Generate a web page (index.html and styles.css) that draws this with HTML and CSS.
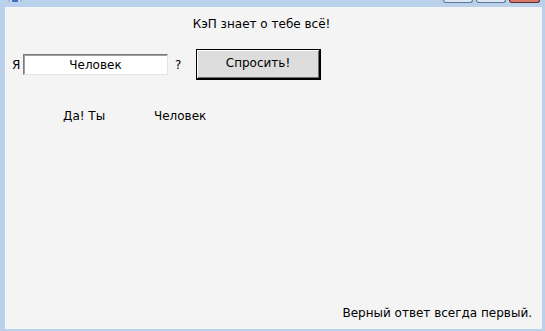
FILE: index.html
```html
<!DOCTYPE html>
<html lang="ru">
<head>
  <meta charset="utf-8">
  <title>КэП</title>
  <link rel="stylesheet" href="styles.css">
</head>
<body>
<div class="window">
  <!-- полоска заголовка окна -->
  <div class="titlebar">
    <span class="app-icon"></span>
    <div class="caption-buttons">
      <span class="cap-btn"></span>
      <span class="cap-btn"></span>
      <span class="cap-btn close"></span>
    </div>
  </div>

  <div class="client">
    <div class="headline">КэП знает о тебе всё!</div>

    <div class="ask-row">
      <label for="who">Я</label>
      <input type="text" id="who" value="Человек">
      <span class="qmark">?</span>
      <button class="ask-btn">Спросить!</button>
    </div>

    <div class="answer-row">
      <span class="answer-yes">Да! Ты</span>
      <span class="answer-who">Человек</span>
    </div>

    <div class="footer">Верный ответ всегда первый.</div>
  </div>
</div>
</body>
</html>
```

FILE: styles.css
```css
/* базовые стили */
html, body {
  margin: 0;
  padding: 0;
}

body {
  width: 545px;
  height: 331px;
  overflow: hidden;
  background-color: #b9d1ea;
  font-family: "DejaVu Sans", Tahoma, sans-serif;
  font-size: 12px;
  color: #000;
}

.window {
  height: 331px;
  display: flex;
  flex-direction: column;
  padding: 0 3px 2px 5px;
  box-sizing: border-box;
}

.titlebar {
  height: 7px;
  display: flex;
  align-items: flex-start;
  flex-shrink: 0;
}

.app-icon {
  width: 14px;
  height: 2px;
  margin-left: 3px;
  background-color: #c9d6e6;
  border-left: 2px solid #aab8c9;
  border-right: 2px solid #aab8c9;
  box-sizing: border-box;
  background-image: linear-gradient(#3d6fc1, #3d6fc1);
  background-size: 6px 2px;
  background-position: center;
  background-repeat: no-repeat;
}

.caption-buttons {
  margin-left: auto;
  margin-right: 2px;
  display: flex;
  gap: 3px;
}

.cap-btn {
  width: 30px;
  height: 3px;
  border: 1px solid #5f7490;
  border-top: none;
  border-radius: 0 0 3px 3px;
  background-color: #dce7f4;
  box-sizing: border-box;
}

.cap-btn.close {
  width: 31px;
  background-color: #d9796a;
  border-color: #5a2a2a;
}

.client {
  flex: 1;
  display: flex;
  flex-direction: column;
  background-color: #f4f4f4;
}

.headline {
  text-align: center;
  margin-top: 9px;
  padding-right: 24px;
  line-height: 16px;
}

/* строка с вопросом */
.ask-row {
  display: flex;
  align-items: center;
  margin-top: 17px;
  height: 31px;
}

.ask-row label {
  margin-left: 7px;
  width: 11px;
}

.ask-row input {
  width: 145px;
  height: 21px;
  box-sizing: border-box;
  padding: 0;
  border: 1px solid;
  border-color: #7a7a7a #e3e3e3 #e3e3e3 #7a7a7a;
  box-shadow: inset 1px 1px #a0a0a0;
  background-color: #fff;
  font-family: "DejaVu Sans", Tahoma, sans-serif;
  font-size: 12px;
  text-align: center;
  color: #000;
  outline: none;
}

.qmark {
  margin-left: 7px;
  width: 21px;
}

.ask-btn {
  width: 125px;
  height: 31px;
  box-sizing: border-box;
  border: 1px solid #000;
  border-right-width: 2px;
  border-bottom-width: 2px;
  box-shadow: inset 1px 1px #fff, inset -1px -1px #6d6d6d;
  background-color: #dddddd;
  font-family: "DejaVu Sans", Tahoma, sans-serif;
  font-size: 12px;
  color: #000;
  padding: 0 0 2px 0;
  cursor: pointer;
}

/* строка с ответом */
.answer-row {
  display: flex;
  margin-top: 28px;
  line-height: 16px;
}

.answer-yes {
  margin-left: 58px;
  width: 91px;
}

.footer {
  margin-top: auto;
  text-align: right;
  padding-right: 10px;
  margin-bottom: 8px;
  line-height: 16px;
}
```
